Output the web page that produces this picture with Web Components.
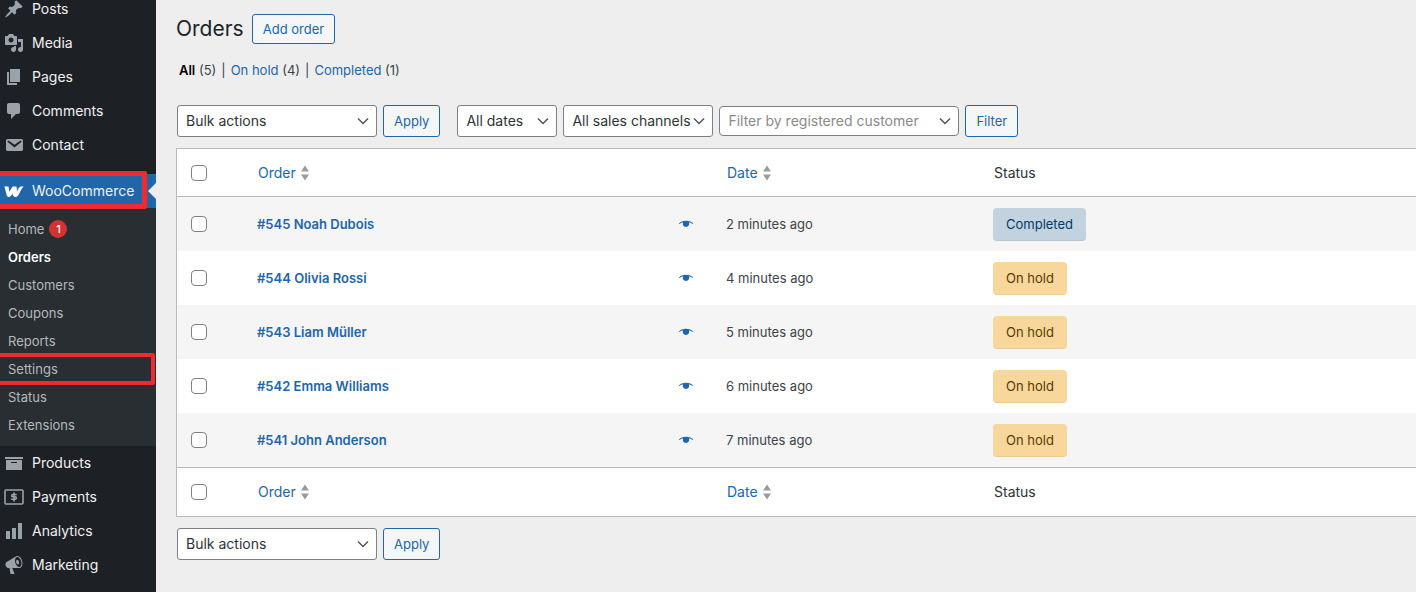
<!DOCTYPE html>
<html lang="en">
<head>
<meta charset="utf-8">
<meta name="viewport" content="width=device-width, initial-scale=1">
<title>Orders</title>
<style>
    body {
        margin: 0;
        background: #eeeeee;
        color: #3c434a;
        font-family: Inter, Roboto, sans-serif;
        font-size: 13px;
        line-height: 20px;
    }
</style>
</head>
<body>
<admin-layout>
    <admin-menu slot="menu">
        <menu-item icon="post">Posts</menu-item>
        <menu-item icon="media">Media</menu-item>
        <menu-item icon="page">Pages</menu-item>
        <menu-item icon="comment">Comments</menu-item>
        <menu-item icon="email">Contact</menu-item>
        <menu-item icon="woo" current>WooCommerce</menu-item>
        <sub-menu>
            <sub-item count="1">Home</sub-item>
            <sub-item current>Orders</sub-item>
            <sub-item>Customers</sub-item>
            <sub-item>Coupons</sub-item>
            <sub-item>Reports</sub-item>
            <sub-item marked>Settings</sub-item>
            <sub-item>Status</sub-item>
            <sub-item>Extensions</sub-item>
        </sub-menu>
        <menu-item icon="archive">Products</menu-item>
        <menu-item icon="money">Payments</menu-item>
        <menu-item icon="chart">Analytics</menu-item>
        <menu-item icon="megaphone">Marketing</menu-item>
    </admin-menu>
    <orders-page></orders-page>
</admin-layout>

<script>
const icons = {
    post: '<path d="M10.44 3.02l1.82-1.82 6.36 6.35-1.83 1.82c-1.05-.68-2.48-.57-3.41.36l-.75.75c-.92.93-1.04 2.35-.35 3.41l-1.83 1.82-2.41-2.41-2.8 2.79c-.42.42-3.38 2.71-3.8 2.29s1.86-3.39 2.28-3.81l2.79-2.79L4.1 9.36l1.83-1.82c1.05.69 2.48.57 3.4-.36l.75-.75c.93-.92 1.05-2.35.36-3.41z"/>',
    media: '<path d="M13 11V4c0-.55-.45-1-1-1h-1.67L9 1H5L3.67 3H2c-.55 0-1 .45-1 1v7c0 .55.45 1 1 1h10c.55 0 1-.45 1-1zM7 4.5c1.38 0 2.5 1.12 2.5 2.5S8.38 9.5 7 9.5 4.5 8.38 4.5 7 5.62 4.5 7 4.5zM14 6h5v10.5c0 1.38-1.12 2.5-2.5 2.5S14 17.88 14 16.5s1.12-2.5 2.5-2.5c.17 0 .34.02.5.05V9h-3V6zm-4 8.05V13h2v3.5c0 1.38-1.12 2.5-2.5 2.5S7 17.88 7 16.5 8.12 14 9.5 14c.17 0 .34.02.5.05z"/>',
    page: '<path d="M6 15V2h10v13H6zm-1 1h8v2H3V5h2v11z"/>',
    comment: '<path d="M5 2h9c1.1 0 2 .9 2 2v7c0 1.1-.9 2-2 2h-2l-5 5v-5H5c-1.1 0-2-.9-2-2V4c0-1.1.9-2 2-2z"/>',
    email: '<path d="M3.87 4h13.25C18.37 4 19 4.59 19 5.79v8.42c0 1.19-.63 1.79-1.88 1.79H3.87c-1.25 0-1.88-.6-1.88-1.79V5.79c0-1.2.63-1.79 1.88-1.79zm6.62 8.6l6.74-5.53c.24-.2.43-.66.13-1.07-.29-.41-.82-.42-1.17-.17l-5.7 3.86L4.8 5.83c-.35-.25-.88-.24-1.17.17-.3.41-.11.87.13 1.07z"/>',
    woo: '<path d="M.2 5.4h4.300l.8 5.400 3.300-5.400h3.900l.6 5.400c1-3.600 2.300-5.400 4.200-5.400h2.600c-3.500 2-4.500 10.600-8.300 10.600-1.900 0-2.700-1.300-3.100-3.400C7.400 14.700 6.300 16 4.700 16 2 16 1.900 8.500.2 5.400z"/>',
    archive: '<path d="M19 4v2H1V4h18zM2 7h16v10H2V7zm11 3V9H7v1h6z"/>',
    money: '<rect x="1" y="3" width="18" height="14" rx="1" fill="none" stroke="currentColor" stroke-width="1.6"/><path d="M12.7 7.5H8.800c-1.400 0-1.400 2.300 0 2.300h2.400c1.500 0 1.500 2.500 0 2.500H7.200M10 5.500v9" fill="none" stroke="currentColor" stroke-width="1.6"/>',
    chart: '<path d="M18 18V2h-4v16h4zm-6 0V7H8v11h4zm-6 0v-8H2v8h4z"/>',
    megaphone: '<path d="M18.15 5.94c.46 1.62.38 3.22-.02 4.48-.42 1.28-1.26 2.18-2.3 2.48-.16.06-.26.06-.4.06-.06.02-.12.02-.18.02-.06.02-.14.02-.22.02h-6.8l2.22 5.5c.02.14-.06.26-.14.34-.08.1-.24.16-.34.16H6.95c-.1 0-.26-.06-.34-.16-.08-.08-.16-.2-.14-.34l-1-5.5H4.25l-.02-.02c-.5.06-1.08-.18-1.54-.62s-.88-1.08-1.06-1.88c-.24-.8-.2-1.56-.02-2.2.18-.62.58-1.08 1.06-1.3l.02-.02 9-5.4c.1-.06.18-.1.24-.16.06-.04.14-.08.24-.12.16-.08.28-.12.5-.18 1.04-.3 2.24.1 3.22.98s1.84 2.24 2.26 3.86zm-2.58 5.98h-.02c.4-.1.74-.34 1.04-.7.58-.7.86-1.76.86-3.04 0-.64-.1-1.3-.28-1.98-.34-1.36-1.02-2.5-1.78-3.24s-1.68-1.1-2.46-.88c-.82.22-1.4.96-1.7 2-.32 1.04-.28 2.36.06 3.72.38 1.36 1 2.5 1.8 3.24.78.74 1.62 1.1 2.48.88zm-2.54-7.08c.22-.04.42-.02.62.04.38.16.76.48 1.02 1s.42 1.2.42 1.78c0 .3-.04.56-.12.8-.18.48-.44.84-.86.94-.34.1-.8-.06-1.14-.4s-.64-.86-.78-1.5c-.18-.62-.12-1.24.02-1.72s.48-.84.82-.94z"/>'
};

class AdminLayout extends HTMLElement {
    constructor() {
        super();
        this.attachShadow({ mode: 'open' });
    }

    connectedCallback() {
        this.shadowRoot.innerHTML = `
            <style>
                :host {
                    display: grid;
                    grid-template-columns: 156px minmax(0, 1fr);
                    min-height: 100vh;
                }
                nav {
                    background: #1d2125;
                    overflow: hidden;
                }
                main {
                    padding: 14px 0 32px 20px;
                }
            </style>
            <nav><slot name="menu"></slot></nav>
            <main><slot></slot></main>
        `;
    }
}

class AdminMenu extends HTMLElement {
    constructor() {
        super();
        this.attachShadow({ mode: 'open' });
    }

    connectedCallback() {
        // the list is scrolled a little, so the first entry is cut at the top
        this.shadowRoot.innerHTML = `
            <style>
                :host {
                    display: flex;
                    flex-direction: column;
                    margin-top: -8px;
                }
            </style>
            <slot></slot>
        `;
    }
}

class MenuItem extends HTMLElement {
    constructor() {
        super();
        this.attachShadow({ mode: 'open' });
    }

    connectedCallback() {
        const icon = icons[this.getAttribute('icon')];

        this.shadowRoot.innerHTML = `
            <style>
                :host {
                    display: block;
                    position: relative;
                    color: #9ca2a7;
                }
                :host([current]) {
                    margin-top: 12px;
                    background: #2166a9;
                    color: #fff;
                }
                a {
                    display: flex;
                    align-items: center;
                    gap: 8px;
                    height: 34px;
                    padding-left: 4px;
                    color: inherit;
                    font-size: 14px;
                    text-decoration: none;
                }
                svg {
                    width: 20px;
                    height: 20px;
                    fill: currentColor;
                }
                span {
                    color: #f0f0f1;
                }
                :host([current]) a::before {
                    content: "";
                    position: absolute;
                    right: 0;
                    top: 9px;
                    border: 8px solid transparent;
                    border-left-width: 0;
                    border-right-color: #eeeeee;
                }
                :host([current]) a::after {
                    content: "";
                    position: absolute;
                    inset: -3px 9px -1px -5px;
                    border: 5px solid #f32a2c;
                    border-radius: 2px;
                }
            </style>
            <a href="#">
                <svg viewBox="0 0 20 20" aria-hidden="true">${icon}</svg>
                <span><slot></slot></span>
            </a>
        `;
    }
}

class SubMenu extends HTMLElement {
    constructor() {
        super();
        this.attachShadow({ mode: 'open' });
    }

    connectedCallback() {
        this.shadowRoot.innerHTML = `
            <style>
                :host {
                    display: flex;
                    flex-direction: column;
                    padding: 7px 0;
                    background: #282e32;
                }
            </style>
            <slot></slot>
        `;
    }
}

class SubItem extends HTMLElement {
    constructor() {
        super();
        this.attachShadow({ mode: 'open' });
    }

    connectedCallback() {
        const count = this.getAttribute('count');

        this.shadowRoot.innerHTML = `
            <style>
                :host {
                    display: block;
                    position: relative;
                    color: #b5b9bd;
                }
                :host([current]) {
                    color: #fff;
                    font-weight: 600;
                }
                a {
                    display: flex;
                    align-items: center;
                    gap: 5px;
                    height: 28px;
                    padding-left: 8px;
                    color: inherit;
                    text-decoration: none;
                }
                .count {
                    width: 18px;
                    border-radius: 9px;
                    background: #d23232;
                    color: #fff;
                    font-size: 11px;
                    font-weight: 500;
                    line-height: 18px;
                    text-align: center;
                }
                :host([marked]) a::after {
                    content: "";
                    position: absolute;
                    inset: -2px 1px -2px -4px;
                    border: 4px solid #f32a2c;
                    border-radius: 2px;
                }
            </style>
            <a href="#"><slot></slot>${count ? `<span class="count">${count}</span>` : ''}</a>
        `;
    }
}

class WpButton extends HTMLElement {
    constructor() {
        super();
        this.attachShadow({ mode: 'open' });
    }

    connectedCallback() {
        this.shadowRoot.innerHTML = `
            <style>
                :host {
                    display: inline-block;
                }
                button {
                    display: block;
                    height: 32px;
                    padding: 0 10px;
                    border: 1px solid #2166a9;
                    border-radius: 3px;
                    background: #f5f6f7;
                    color: #2166a9;
                    font: inherit;
                }
                :host([small]) button {
                    height: 30px;
                }
            </style>
            <button type="button"><slot></slot></button>
        `;
    }
}

class WpSelect extends HTMLElement {
    constructor() {
        super();
        this.attachShadow({ mode: 'open' });
    }

    connectedCallback() {
        const label = this.getAttribute('label');
        const text = this.getAttribute('text');

        this.shadowRoot.innerHTML = `
            <style>
                :host {
                    display: inline-grid;
                    align-items: center;
                }
                select, svg {
                    grid-area: 1 / 1;
                }
                select {
                    appearance: none;
                    width: 100%;
                    height: 32px;
                    padding: 0 16px 0 8px;
                    border: 1px solid #7d8084;
                    border-radius: 3px;
                    background: #fff;
                    color: #2c3338;
                    font: inherit;
                    font-size: 14px;
                }
                :host([placeholder]) select {
                    height: 30px;
                    border-radius: 4px;
                    color: #8a8a8a;
                }
                svg {
                    justify-self: end;
                    width: 12px;
                    height: 12px;
                    margin-right: 8px;
                    fill: none;
                    stroke: #50575e;
                    stroke-width: 1.5;
                    pointer-events: none;
                }
            </style>
            <select aria-label="${label}"><option>${text}</option></select>
            <svg viewBox="0 0 12 12" aria-hidden="true"><path d="M1 3.5l5 5 5-5"/></svg>
        `;
    }
}

class StatusBadge extends HTMLElement {
    constructor() {
        super();
        this.attachShadow({ mode: 'open' });
    }

    connectedCallback() {
        this.shadowRoot.innerHTML = `
            <style>
                :host {
                    display: inline-block;
                    padding: 0 13px;
                    border-bottom: 1px solid rgba(0, 0, 0, .05);
                    border-radius: 4px;
                    background: #f8d79c;
                    color: #573b00;
                    line-height: 32px;
                    vertical-align: middle;
                }
                :host([type="completed"]) {
                    background: #c3d2df;
                    color: #003d66;
                }
            </style>
            <slot></slot>
        `;
    }
}

class OrdersTable extends HTMLElement {
    constructor() {
        super();
        this.attachShadow({ mode: 'open' });
    }

    connectedCallback() {
        const orders = [
            ['#545 Noah Dubois', '2 minutes ago', 'Completed'],
            ['#544 Olivia Rossi', '4 minutes ago', 'On hold'],
            ['#543 Liam Müller', '5 minutes ago', 'On hold'],
            ['#542 Emma Williams', '6 minutes ago', 'On hold'],
            ['#541 John Anderson', '7 minutes ago', 'On hold']
        ];

        this.shadowRoot.innerHTML = `
            <style>
                :host {
                    display: block;
                }
                table {
                    width: 100%;
                    table-layout: fixed;
                    border: 1px solid #b9bbbe;
                    border-right: 0;
                    border-spacing: 0;
                    background: #fff;
                }
                .check { width: 70px; }
                .date { width: 267px; }
                .status { width: 433px; }
                th, td {
                    padding: 0 10px;
                    text-align: left;
                    vertical-align: middle;
                }
                th {
                    height: 47px;
                    color: #2c3338;
                    font-size: 14px;
                    font-weight: 400;
                }
                thead th { border-bottom: 1px solid #b9bbbe; }
                tfoot th { border-top: 1px solid #b9bbbe; height: 48px; }
                td { height: 54px; }
                tbody tr:nth-child(odd) { background: #f5f5f5; }
                th:first-child, td:first-child { padding: 0 14px; }
                th:not(:first-child) { padding-left: 11px; }
                input {
                    appearance: none;
                    display: block;
                    box-sizing: border-box;
                    width: 16px;
                    height: 16px;
                    margin: 0;
                    border: 1px solid #7d8084;
                    border-radius: 4px;
                    background: #fff;
                }
                a {
                    color: #2166a9;
                    text-decoration: none;
                }
                th a {
                    display: flex;
                    align-items: center;
                    gap: 5px;
                }
                .sort {
                    width: 8px;
                    height: 16px;
                    fill: #9a9da0;
                }
                .order {
                    display: flex;
                    align-items: center;
                    justify-content: space-between;
                    padding-right: 12px;
                    font-weight: 600;
                }
                .eye {
                    display: block;
                    width: 16px;
                    height: 16px;
                    fill: #2166a9;
                }
            </style>
            <table>
                <colgroup>
                    <col class="check"><col><col class="date"><col class="status">
                </colgroup>
                <thead>${this.headings()}</thead>
                <tbody>${orders.map(order => this.row(order)).join('')}</tbody>
                <tfoot>${this.headings()}</tfoot>
            </table>
        `;
    }

    headings() {
        const sort = '<svg class="sort" viewBox="0 0 8 16" aria-hidden="true"><path d="M4 .5l4 6H0zM4 15.5l4-6H0z"/></svg>';

        return `
            <tr>
                <th><input type="checkbox" aria-label="Select all"></th>
                <th><a href="#">Order ${sort}</a></th>
                <th><a href="#">Date ${sort}</a></th>
                <th>Status</th>
            </tr>
        `;
    }

    row([name, date, status]) {
        const type = status === 'Completed' ? 'completed' : 'on-hold';

        return `
            <tr>
                <td><input type="checkbox" aria-label="Select ${name}"></td>
                <td>
                    <div class="order">
                        <a href="#">${name}</a>
                        <a href="#" aria-label="Preview"><svg class="eye" viewBox="0 0 16 16" aria-hidden="true"><path d="M.7 7.700C3.500 3.700 12.500 3.700 15.300 7.700l-.6.4C13.500 7.200 12.400 6.700 11 6.300 11.700 9 10.300 11 8 11S4.300 9 5 6.300C3.600 6.700 2.500 7.200 1.300 8.100z"/></svg></a>
                    </div>
                </td>
                <td>${date}</td>
                <td><status-badge type="${type}">${status}</status-badge></td>
            </tr>
        `;
    }
}

class OrdersPage extends HTMLElement {
    constructor() {
        super();
        this.attachShadow({ mode: 'open' });
    }

    connectedCallback() {
        this.shadowRoot.innerHTML = `
            <style>
                :host {
                    display: block;
                }
                header, .bar, .views {
                    display: flex;
                    align-items: center;
                }
                header { gap: 8px; }
                h1 {
                    margin: 0;
                    color: #1d2327;
                    font-size: 21px;
                    font-weight: 400;
                    line-height: 30px;
                }
                .views {
                    gap: 5px;
                    margin: 16px 0 25px;
                    padding-left: 3px;
                }
                .views a {
                    color: #2166a9;
                    text-decoration: none;
                }
                .views a.current {
                    color: #000;
                    font-weight: 600;
                }
                .bar {
                    gap: 6px;
                    padding-left: 1px;
                }
                .bulk { width: 200px; }
                .dates { width: 100px; margin-left: 11px; }
                .channels { width: 150px; }
                .customer { width: 240px; }
                orders-table { margin: 11px 0; }
            </style>
            <header>
                <h1>Orders</h1>
                <wp-button small>Add order</wp-button>
            </header>
            <div class="views">
                <span><a class="current" href="#">All</a> (5)</span>
                <span>|</span>
                <span><a href="#">On hold</a> (4)</span>
                <span>|</span>
                <span><a href="#">Completed</a> (1)</span>
            </div>
            <div class="bar">
                <wp-select class="bulk" label="Select bulk action" text="Bulk actions"></wp-select>
                <wp-button>Apply</wp-button>
                <wp-select class="dates" label="Filter by date" text="All dates"></wp-select>
                <wp-select class="channels" label="Filter by sales channel" text="All sales channels"></wp-select>
                <wp-select class="customer" placeholder label="Customer" text="Filter by registered customer"></wp-select>
                <wp-button>Filter</wp-button>
            </div>
            <orders-table></orders-table>
            <div class="bar">
                <wp-select class="bulk" label="Select bulk action" text="Bulk actions"></wp-select>
                <wp-button>Apply</wp-button>
            </div>
        `;
    }
}

customElements.define('admin-layout', AdminLayout);
customElements.define('admin-menu', AdminMenu);
customElements.define('menu-item', MenuItem);
customElements.define('sub-menu', SubMenu);
customElements.define('sub-item', SubItem);
customElements.define('wp-button', WpButton);
customElements.define('wp-select', WpSelect);
customElements.define('status-badge', StatusBadge);
customElements.define('orders-table', OrdersTable);
customElements.define('orders-page', OrdersPage);
</script>
</body>
</html>
